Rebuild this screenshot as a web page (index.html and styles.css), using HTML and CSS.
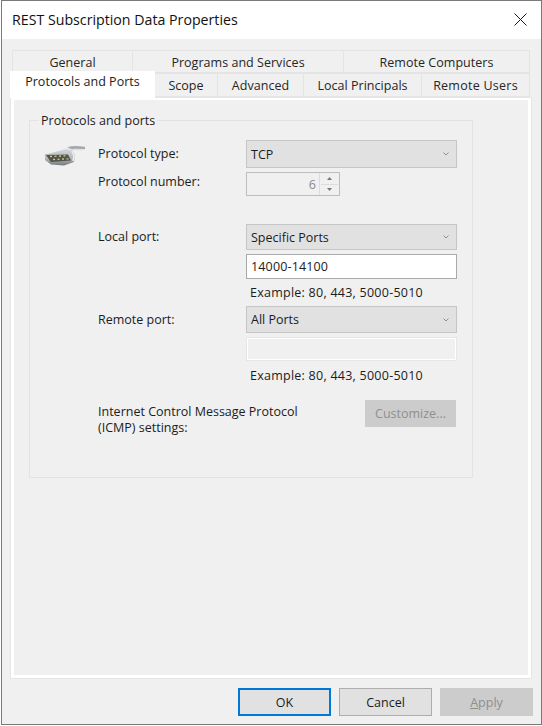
FILE: index.html
```html
<!DOCTYPE html>
<html lang="en">
<head>
<meta charset="utf-8">
<title>REST Subscription Data Properties</title>
<link rel="stylesheet" href="styles.css">
</head>
<body>
<div class="window">
  <header class="titlebar">
    <span class="title">REST Subscription Data Properties</span>
    <svg class="close" width="13" height="13" viewBox="0 0 13 13"><path d="M.5.5l12 12M12.500.5l-12 12" stroke="#1a1a1a" stroke-width="1" fill="none"/></svg>
  </header>
  <main class="client">
    <div class="tabs">
      <div class="tabrow back">
        <div class="tab t-general">General</div>
        <div class="tab t-programs">Programs and Services</div>
        <div class="tab t-computers">Remote Computers</div>
      </div>
      <div class="tabrow front">
        <div class="tab t-protocols active">Protocols and Ports</div>
        <div class="tab t-scope">Scope</div>
        <div class="tab t-advanced">Advanced</div>
        <div class="tab t-principals">Local Principals</div>
        <div class="tab t-users">Remote Users</div>
      </div>
    </div>
    <section class="panel">
      <fieldset class="group">
        <legend class="legend">Protocols and ports</legend>
        <div class="form">
          <svg class="icon" width="42" height="22" viewBox="0 0 42 22">
            <defs>
              <linearGradient id="body" x1="0" y1="0" x2="0" y2="1">
                <stop offset="0" stop-color="#d9dcde"/>
                <stop offset=".6" stop-color="#b4b8ba"/>
                <stop offset="1" stop-color="#74787a"/>
              </linearGradient>
            </defs>
            <path d="M24 3.500C29 1.500 35 2.500 41 3" stroke="#a3a8ac" stroke-width="2.600" fill="none"/>
            <path d="M25 5C30 4 34 5 38 5" stroke="#d5d9dc" stroke-width="1" fill="none"/>
            <path d="M1 9L24 2.500L28 4L31 10L30 17L20 20.500L7 19.500L1 15Z" fill="url(#body)"/>
            <path d="M2 10L24 9.500L27 15.500L7 17Z" fill="#53544a"/>
            <path d="M6 11.500l2-.1M10.500 11.300l2-.1M15 11.100l2-.1M19.500 10.900l2-.1M9 14.500l2-.1M13.500 14.300l2-.1M18 14.100l2-.1M22.500 13.900l2-.1" stroke="#cfc98c" stroke-width="1.300"/>
            <path d="M3 8.500L23 3.500L27 5" stroke="#f0f1f2" stroke-width="1" fill="none"/>
            <path d="M28 6L30 11L29 16" stroke="#eceeef" stroke-width="1.500" fill="none"/>
          </svg>
          <label class="lbl lift-1 r-type">Protocol type:</label>
          <div class="select r-type"><span>TCP</span><svg class="chev" width="6" height="4" viewBox="0 0 6 4"><path d="M.5.500L3 3 5.500.500" stroke="#8f8f8f" fill="none"/></svg></div>

          <label class="lbl lift-3 r-num">Protocol number:</label>
          <div class="spin r-num">
            <span class="spin-val">6</span>
            <div class="spin-btns">
              <div class="spin-btn"><svg width="5" height="3" viewBox="0 0 5 3"><path d="M2.500 0L5 3H0Z" fill="#777"/></svg></div>
              <div class="spin-btn"><svg width="5" height="3" viewBox="0 0 5 3"><path d="M0 0H5L2.500 3Z" fill="#777"/></svg></div>
            </div>
          </div>

          <label class="lbl lift-1 r-local">Local port:</label>
          <div class="select r-local"><span>Specific Ports</span><svg class="chev" width="6" height="4" viewBox="0 0 6 4"><path d="M.5.500L3 3 5.500.500" stroke="#8f8f8f" fill="none"/></svg></div>
          <div class="input r-lin">14000-14100</div>
          <div class="example r-lex">Example: 80, 443, 5000-5010</div>

          <label class="lbl r-remote">Remote port:</label>
          <div class="select r-remote"><span>All Ports</span><svg class="chev" width="6" height="4" viewBox="0 0 6 4"><path d="M.5.500L3 3 5.500.500" stroke="#8f8f8f" fill="none"/></svg></div>
          <div class="input disabled r-rin"></div>
          <div class="example r-rex">Example: 80, 443, 5000-5010</div>

          <label class="lbl icmp r-icmp">Internet Control Message Protocol<br>(ICMP) settings:</label>
          <div class="btn off customize r-icmp">Customize...</div>
        </div>
      </fieldset>
    </section>
    <footer class="footer">
      <div class="btn default">OK</div>
      <div class="btn">Cancel</div>
      <div class="btn off"><span><u>A</u>pply</span></div>
    </footer>
  </main>
</div>
</body>
</html>
```
FILE: styles.css
```css
* { box-sizing: border-box; }
html, body { margin: 0; padding: 0; background: #fff; }
body {
  width: 542px;
  height: 726px;
  overflow: hidden;
  font-family: "Open Sans", "Noto Sans", sans-serif;
  font-size: 12.5px;
  color: #1c1c1c;
}
.window {
  width: 541px;
  height: 725px;
  margin-left: 1px;
  border: 1px solid #7a7a7a;
  display: flex;
  flex-direction: column;
  background: #f0f0f0;
}
.titlebar {
  height: 38px;
  flex: none;
  background: #fff;
  display: flex;
  align-items: center;
  justify-content: space-between;
  padding: 0 14px 2px 10px;
}
.title { font-size: 14.200px; color: #111; }
.client { flex: 1; display: flex; flex-direction: column; padding: 11px 8px 0 8px; min-height: 0; }

.tabs { flex: none; height: 47px; position: relative; z-index: 1; }
.tabrow { display: flex; height: 23px; margin-left: 2px; }
.tab {
  display: flex;
  align-items: center;
  justify-content: center;
  height: 23px;
  padding-top: 1px;
  background: #f0f0f0;
  border: 1px solid #e4e4e4;
  border-left-width: 0;
  color: #262626;
  letter-spacing: .03px;
}
.tab:first-child { border-left-width: 1px; }
.t-general { width: 121px; }
.t-programs { width: 211px; }
.t-computers { width: 186px; }
.t-protocols { width: 145px; }
.t-scope { width: 63px; }
.t-advanced { width: 86px; }
.t-principals { width: 118px; }
.t-users { width: 108px; letter-spacing: .25px; }
.front { margin-left: 0; }
.front .tab { height: 24px; padding-top: 0; }
.tab.active {
  position: relative;
  z-index: 2;
  height: 27px;
  margin-top: -2px;
  background: #fff;
  border: 0;
  padding-bottom: 6px;
  color: #1c1c1c;
}
.panel {
  flex: none;
  width: 522px;
  height: 582px;
  background: #f0f0f0;
  border: 4px solid #fff;
  border-top-width: 3px;
  outline: 1px solid #e6e6e6;
  outline-offset: -1px;
  padding: 12px 0 0 15px;
}
.group {
  width: 444px;
  height: 366px;
  margin: 0;
  padding: 0;
  border: 1px solid #e3e3e3;
  min-width: 0;
}
.legend { margin-left: 9px; padding: 0 2px; color: #1c1c1c; line-height: 17px; }
.form {
  margin-top: 11px;
  display: grid;
  grid-template-columns: 14px 54px 148px 211px;
  grid-template-rows: 28px 4px 24px 28px 26px 4px 25px 27px 27px 4px 24px 28px 11px 27px;
  align-items: center;
}
.icon { grid-column: 1 / 3; grid-row: 1 / 4; align-self: start; margin-left: 14px; margin-top: 5px; filter: blur(.4px); }
.lbl { grid-column: 3; color: #1c1c1c; white-space: nowrap; }
.lift-1 { padding-bottom: 2px; }
.lift-3 { padding-bottom: 6px; }
.select, .input, .spin, .customize, .example { grid-column: 4; }
.r-type { grid-row: 1; }
.r-num { grid-row: 3; }
.r-local { grid-row: 5; }
.r-lin { grid-row: 7; }
.r-lex { grid-row: 8; }
.r-remote { grid-row: 9; }
.r-rin { grid-row: 11; }
.r-rex { grid-row: 12; }
.r-icmp { grid-row: 14; }
.select {
  display: flex;
  align-items: center;
  justify-content: space-between;
  height: 100%;
  background: #e1e1e1;
  border: 1px solid #c6c6c6;
  padding: 0 7px 0 4px;
}
.input {
  height: 100%;
  display: flex;
  align-items: center;
  background: #fff;
  border: 1px solid #a9a9a9;
  padding-left: 4px;
  letter-spacing: .15px;
}
.input.disabled { background: #f0f0f0; border: 1px solid #e6e6e6; box-shadow: inset 0 0 0 1px #fff; }
.example { padding-left: 4px; letter-spacing: .25px; }
.spin {
  width: 94px;
  height: 100%;
  display: flex;
  justify-content: flex-end;
  align-items: center;
  border: 1px solid #bdbdbd;
  background: #f0f0f0;
  color: #8a8a8a;
}
.spin-val { margin-right: 3px; }
.spin-btns { width: 20px; height: 100%; display: flex; flex-direction: column; border-left: 1px solid #dcdcdc; padding: 1px; }
.spin-btn { flex: 1; display: flex; align-items: center; justify-content: center; background: #f0f0f0; }
.spin-btn + .spin-btn { border-top: 1px solid #dcdcdc; }
.btn {
  display: flex;
  align-items: center;
  justify-content: center;
  width: 93px;
  height: 28px;
  background: #e1e1e1;
  border: 1px solid #adadad;
  color: #1c1c1c;
}
.btn.off { background: #cccccc; border-color: #cccccc; color: #8f8f8f; }
.btn.default { border: 2px solid #0078d7; }
.customize { width: 91px; margin-left: 119px; height: 27px; }
.icmp { line-height: 16px; align-self: start; margin-top: 4px; }
.footer {
  flex: 1;
  display: flex;
  justify-content: flex-end;
  gap: 8px;
  padding: 9px 0 0 0;
}
```
